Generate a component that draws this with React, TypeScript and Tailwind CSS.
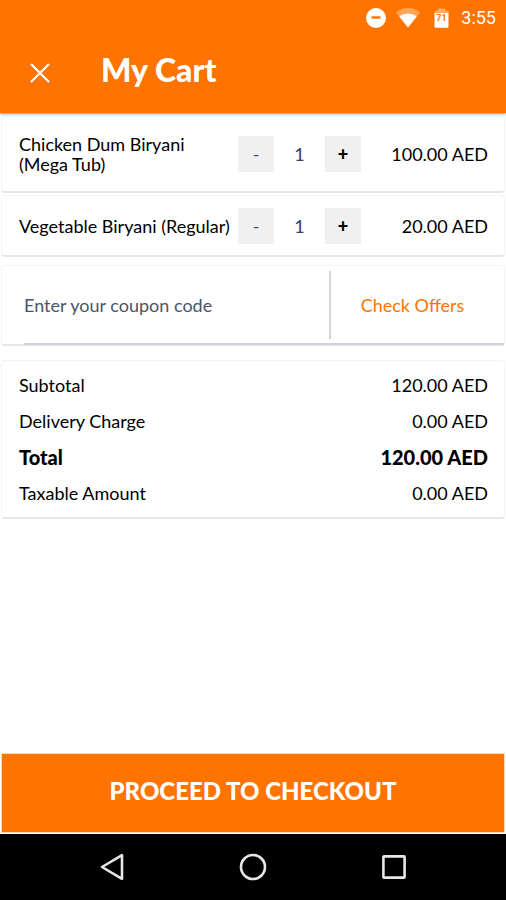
import { useState } from "react";

const initialItems = [
  { id: "chicken", name: "Chicken Dum Biryani (Mega Tub)", price: 100, quantity: 1, height: "h-[77px]" },
  { id: "vegetable", name: "Vegetable Biryani (Regular)", price: 20, quantity: 1, height: "h-[62px]" },
];

const formatPrice = (amount: number) => `${amount.toFixed(2)} AED`;

const card = "mx-px rounded-sm border border-b-2 border-gray-100 border-b-gray-200 bg-white";

function StatusBar() {
  return (
    <div className="flex h-9 items-center justify-end pr-2.5 text-white">
      <svg width="20" height="20" viewBox="0 0 20 20" aria-hidden="true">
        <circle cx="10" cy="10" r="10" fill="currentColor" />
        <path d="M5.5 9.5h9" stroke="#ff7300" strokeWidth="2.4" />
      </svg>
      <svg className="ml-2.5" width="24" height="20" viewBox="0 0 24 20" aria-hidden="true">
        <path d="M0 4.5a18.5 18.5 0 0 1 24 0L12 19.5z" fill="currentColor" opacity="0.35" />
        <path d="M3.2 8.5a14.5 14.5 0 0 1 17.6 0L12 19.5z" fill="currentColor" />
      </svg>
      <svg className="ml-3.5" width="15" height="20" viewBox="0 0 15 20" aria-hidden="true">
        <path d="M0.5 5V3.6Q0.5 2.4 2 2.4H4V0.4H11V2.4H13Q14.5 2.4 14.5 3.6V5z" fill="currentColor" opacity="0.4" />
        <path d="M0.5 5h14v13.6q0 1.2-1.2 1.2H1.7q-1.2 0-1.2-1.2z" fill="currentColor" />
        <text x="7.5" y="12.5" textAnchor="middle" fontSize="9" fontWeight="700" fontFamily="Roboto, sans-serif" fill="#ff7300">
          71
        </text>
      </svg>
      <span className="ml-3 font-[Roboto,sans-serif] text-lg">3:55</span>
    </div>
  );
}

function Header() {
  return (
    <header className="bg-[#ff7300] text-white shadow-sm shadow-gray-400">
      <StatusBar />
      <div className="flex h-[77px] items-center pb-1 pl-[30px]">
        <button type="button" aria-label="Close" className="mr-[51px]">
          <svg width="20" height="20" viewBox="0 0 20 20" fill="none" stroke="currentColor" strokeWidth="2.2">
            <path d="M1 1l18 18M19 1L1 19" />
          </svg>
        </button>
        <h1 className="pb-1.5 text-[32px] leading-10 font-black">My Cart</h1>
      </div>
    </header>
  );
}

function NavigationBar() {
  return (
    <nav className="flex h-[66px] items-center justify-center gap-[115px] bg-black text-gray-200">
      <button type="button" aria-label="Back">
        <svg width="24" height="28" viewBox="0 0 24 28" fill="none" stroke="currentColor" strokeWidth="2.6" strokeLinejoin="round">
          <path d="M22 2.2v23.6L2 14z" />
        </svg>
      </button>
      <button type="button" aria-label="Home">
        <svg width="28" height="28" viewBox="0 0 28 28" fill="none" stroke="currentColor" strokeWidth="2.6">
          <circle cx="14" cy="14" r="12" />
        </svg>
      </button>
      <button type="button" aria-label="Recent apps">
        <svg width="24" height="28" viewBox="0 0 24 28" fill="none" stroke="currentColor" strokeWidth="2.6" strokeLinejoin="round">
          <rect x="1.4" y="3.4" width="21.2" height="21.2" rx="0.5" />
        </svg>
      </button>
    </nav>
  );
}

export default function App() {
  const [items, setItems] = useState(initialItems);

  const changeQuantity = (id: string, step: number) =>
    setItems(items.map((item) => (item.id === id ? { ...item, quantity: Math.max(0, item.quantity + step) } : item)));

  const subtotal = items.reduce((sum, item) => sum + item.price * item.quantity, 0);
  const summary = [
    { label: "Subtotal", amount: subtotal, bold: false },
    { label: "Delivery Charge", amount: 0, bold: false },
    { label: "Total", amount: subtotal, bold: true },
    { label: "Taxable Amount", amount: 0, bold: false },
  ];

  return (
    <div className="flex min-h-screen flex-col bg-white font-[Lato,sans-serif] text-lg text-black">
      <Header />
      <main className="flex flex-1 flex-col">
        <ul className="mt-[3px] flex flex-col gap-0.5">
          {items.map((item) => (
            <li key={item.id} className={`flex items-center pr-4 pl-[17px] ${item.height} ${card}`}>
              <span className="flex-1 leading-5">{item.name}</span>
              <div className="flex w-[123px] items-center justify-between">
                <button
                  type="button"
                  aria-label={`Remove one ${item.name}`}
                  className="size-9 bg-[#f0f0f0] text-gray-600"
                  onClick={() => changeQuantity(item.id, -1)}
                >
                  -
                </button>
                <span className="text-gray-700">{item.quantity}</span>
                <button
                  type="button"
                  aria-label={`Add one ${item.name}`}
                  className="size-9 bg-[#f0f0f0] font-black"
                  onClick={() => changeQuantity(item.id, 1)}
                >
                  +
                </button>
              </div>
              <span className="w-[127px] text-right">{formatPrice(item.price * item.quantity)}</span>
            </li>
          ))}
        </ul>

        <form className="mx-px mt-2 flex h-[81px] flex-col rounded-sm border border-b-2 border-gray-100 border-b-gray-200 bg-white pl-[22px]">
          <div className="-mb-px flex flex-1 items-center border-b-2 border-gray-300">
            <input
              type="text"
              aria-label="Coupon code"
              placeholder="Enter your coupon code"
              className="min-w-0 flex-1 outline-none placeholder:text-gray-600"
            />
            <div className="flex h-[68px] w-[175px] items-center border-l-2 border-gray-300">
              <button type="button" className="flex-1 pr-2.5 text-[#ff7300]">
                Check Offers
              </button>
            </div>
          </div>
        </form>

        <dl className={`mt-3.5 py-1.5 pr-4 pl-[17px] ${card}`}>
          {summary.map((row) => (
            <div key={row.label} className={`flex h-9 items-center justify-between ${row.bold ? "text-xl font-black" : ""}`}>
              <dt>{row.label}</dt>
              <dd>{formatPrice(row.amount)}</dd>
            </div>
          ))}
        </dl>

        <button
          type="button"
          className="mx-px mt-auto mb-px h-20 border border-orange-200 bg-[#ff7300] pb-1 text-2xl font-black text-white"
        >
          PROCEED TO CHECKOUT
        </button>
      </main>
      <NavigationBar />
    </div>
  );
}
